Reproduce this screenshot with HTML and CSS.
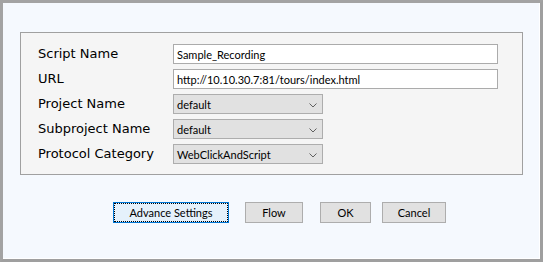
FILE: index.html
```html
<!DOCTYPE html>
<html lang="en">
<head>
  <meta charset="UTF-8">
  <title>Script Properties</title>
  <link rel="stylesheet" href="styles.css">
</head>
<body>
  <div class="dialog">
    <div class="panel">
      <div class="fields">
        <label>Script Name</label>
        <div class="textbox">Sample_Recording</div>

        <label>URL</label>
        <div class="textbox">http://10.10.30.7:81/tours/index.html</div>

        <label>Project Name</label>
        <div class="combo">
          <span>default</span>
          <svg width="8" height="5" viewBox="0 0 8 5"><polyline points="0.5,0.5 4,4 7.5,0.5" fill="none" stroke="#606060" stroke-width="1"/></svg>
        </div>

        <label>Subproject Name</label>
        <div class="combo">
          <span>default</span>
          <svg width="8" height="5" viewBox="0 0 8 5"><polyline points="0.5,0.5 4,4 7.5,0.5" fill="none" stroke="#606060" stroke-width="1"/></svg>
        </div>

        <label>Protocol Category</label>
        <div class="combo">
          <span>WebClickAndScript</span>
          <svg width="8" height="5" viewBox="0 0 8 5"><polyline points="0.5,0.5 4,4 7.5,0.5" fill="none" stroke="#606060" stroke-width="1"/></svg>
        </div>
      </div>
    </div>

    <div class="buttons">
      <button class="btn btn-advance focused">Advance Settings</button>
      <button class="btn btn-flow">Flow</button>
      <button class="btn btn-ok">OK</button>
      <button class="btn btn-cancel">Cancel</button>
    </div>
  </div>
</body>
</html>
```
FILE: styles.css
```css
body {
  margin: 0;
  background-color: #f5f9fe;
}

.dialog {
  box-sizing: border-box;
  width: 543px;
  height: 262px;
  border: 3px solid #9f9f9f;
  border-top-color: #a3a3a3;
  border-left-color: #a3a3a3;
  box-shadow: inset -1px -1px 0 #ffffff;
  background-color: #f5f9fe;
  padding: 29px 0 0 17px;
}

.panel {
  box-sizing: border-box;
  width: 503px;
  height: 143px;
  border: 1px solid #a0a0a0;
  background-color: #f5f5f5;
  padding: 11px 0 0 17px;
}

.fields {
  display: grid;
  grid-template-columns: 135px auto;
  grid-auto-rows: 20px;
  row-gap: 5px;
  align-items: center;
}

.fields label {
  font-family: "DejaVu Sans", sans-serif;
  font-size: 13px;
  color: #000;
  padding-bottom: 1px;
}

.textbox,
.combo {
  box-sizing: border-box;
  height: 20px;
  border: 1px solid #ababab;
  font-family: Lato, sans-serif;
  font-size: 11px;
  color: #000;
  padding-left: 3px;
  display: flex;
  align-items: center;
}

.textbox {
  width: 325px;
  background-color: #fff;
}

.combo {
  width: 150px;
  background-color: #e1e1e1;
  border-color: #adadad;
  justify-content: space-between;
  padding-right: 5px;
}

.combo svg {
  margin-top: 2px;
}

.buttons {
  display: flex;
  margin-top: 27px;
  padding-left: 93px;
}

.btn {
  box-sizing: border-box;
  height: 21px;
  padding: 0;
  border: 1px solid #adadad;
  background-color: #e1e1e1;
  font-family: Lato, sans-serif;
  font-size: 11px;
  color: #000;
}

.btn.focused {
  border-color: #0078d7;
  background-color: #e5f1fb;
  outline: 1px dotted #000;
  outline-offset: -2px;
}

.btn-advance {
  width: 116px;
}

.btn-flow {
  width: 58px;
  margin-left: 16px;
}

.btn-ok {
  width: 51px;
  margin-left: 17px;
}

.btn-cancel {
  width: 64px;
  margin-left: 11px;
}
```
